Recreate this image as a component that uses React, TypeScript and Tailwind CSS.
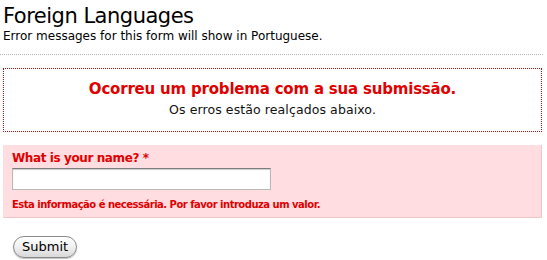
export default function App() {
  return (
    <div className="w-[547px] h-[260px] bg-white text-black font-['DejaVu_Sans',sans-serif] overflow-hidden">
      <div className="px-[3px] pt-[3px]">
        <h1 className="text-[21px] leading-[26px] tracking-[-0.5px]">Foreign Languages</h1>
        <p className="text-[12px] leading-[14px]">Error messages for this form will show in Portuguese.</p>
      </div>
      <div className="mt-[11px] mr-[4px] border-t border-dotted border-[#b8b8b8]" />
      <div className="ml-[3px] mr-[5px] mt-[13px] h-[64px] border border-dotted border-[#d40000] flex flex-col items-center pt-[11px]">
        <div className="text-[15px] leading-[18px] font-bold text-[#e00000] tracking-[-0.2px]">Ocorreu um problema com a sua submissão.</div>
        <div className="text-[12.5px] leading-[16px] mt-[4px] tracking-[0.1px] text-[#111]">Os erros estão realçados abaixo.</div>
      </div>
      <div className="ml-[3px] mr-[5px] mt-[13px] h-[73px] bg-[#ffdde0] border-r border-b border-[#f0c6ca] px-[9px] pt-[6px]">
        <div className="text-[12px] leading-[14px] font-bold text-[#e00000] tracking-[-0.4px]">What is your name? *</div>
        <input className="mt-[3px] block w-[259px] h-[22px] bg-white border border-[#b8b8b8] border-t-[#7c7c7c] shadow-[inset_0_1px_1px_rgba(0,0,0,0.2)] outline-none" />
        <div className="mt-[9px] text-[10px] leading-[12px] font-bold text-[#e00000] tracking-[-0.5px]">Esta informação é necessária. Por favor introduza um valor.</div>
      </div>
      <div className="px-[13px] pt-[16px]">
        <button className="h-[22px] px-[8px] rounded-full border border-[#8a8a8a] bg-gradient-to-b from-white via-[#f0f0f0] to-[#d8d8d8] text-[13px] leading-[18px] shadow-[0_1px_1px_rgba(0,0,0,0.25)]">Submit</button>
      </div>
    </div>
  );
}
